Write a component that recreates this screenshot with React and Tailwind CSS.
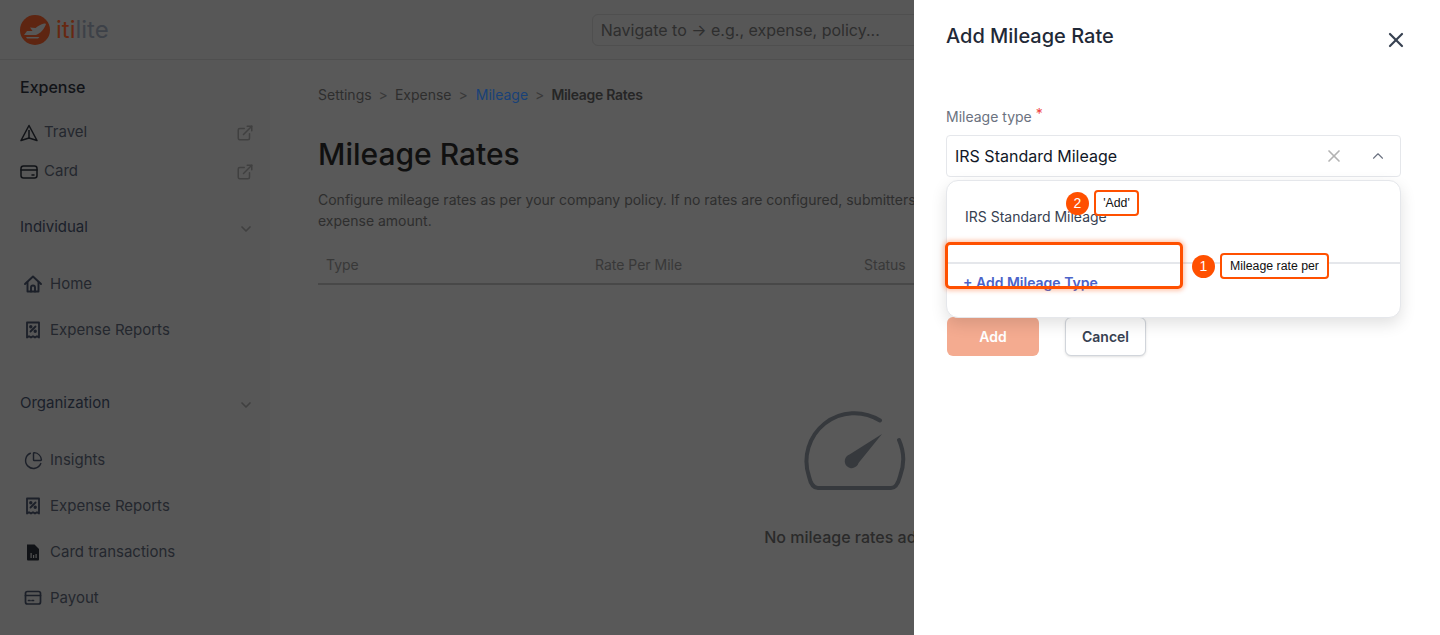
import React from "react";
import { ExternalLink, ChevronDown, ChevronUp, X, ChartPie } from "lucide-react";

const font = { fontFamily: "Inter, 'Liberation Sans', sans-serif" };
const ICON = "#1c2029";

function Home() {
  return (
    <svg width="20" height="20" viewBox="0 0 20 20" fill="none" stroke={ICON} strokeWidth="1.900" strokeLinejoin="round" strokeLinecap="round">
      <path d="M2 10L10 2.500 18 10" />
      <path d="M4.500 8.500V17.500H15.500V8.500" />
      <path d="M8 17.500V13.500a2 2 0 0 1 4 0v4" />
    </svg>
  );
}

function Receipt() {
  return (
    <svg width="20" height="20" viewBox="0 0 20 20" fill="none" stroke={ICON} strokeWidth="1.800" strokeLinejoin="round" strokeLinecap="round">
      <path d="M4 2.500h12v15l-2-1.300-2 1.300-2-1.300-2 1.300-2-1.300-2 1.300z" />
      <path d="M7.500 11.500l5-5" />
      <circle cx="7.800" cy="6.800" r=".8" fill={ICON} />
      <circle cx="12.200" cy="11.200" r=".8" fill={ICON} />
    </svg>
  );
}

function FileBars() {
  return (
    <svg width="20" height="20" viewBox="0 0 20 20">
      <path fill="#101216" d="M4 2.500h7.500L16 7v10.500a1 1 0 0 1-1 1H5a1 1 0 0 1-1-1z" />
      <path fill="#555" d="M7.500 11h1.200v5H7.500zM10 13h1.200v3H10zM12.500 12h1.200v4h-1.200z" />
    </svg>
  );
}

function PayCard() {
  return (
    <svg width="20" height="20" viewBox="0 0 20 20" fill="none" stroke={ICON} strokeWidth="1.700" strokeLinecap="round">
      <rect x="2.500" y="3.500" width="15" height="12.500" rx="2" />
      <path d="M2.500 7.500h15M5.500 12.500h1.500M9 12.500h1.500" />
    </svg>
  );
}

function Nav() {
  return (
    <svg width="18" height="18" viewBox="0 0 18 18" fill="none" stroke="#111317" strokeWidth="1.500" strokeLinejoin="round">
      <path d="M9 1.500L17 16.500 9 14 1 16.500z" />
      <path d="M9 6v8" />
    </svg>
  );
}

function MiniCard() {
  return (
    <svg width="18" height="18" viewBox="0 0 18 18" fill="none" stroke="#111317" strokeWidth="1.500" strokeLinecap="round">
      <rect x="1" y="3" width="16" height="12" rx="2.500" />
      <path d="M1 7h16M12 12h2" />
    </svg>
  );
}

function Head({ label, className }) {
  return (
    <div className={`flex h-6 items-center justify-between pr-[16px] text-[15px] text-[#1a202a] ${className}`}>
      <span>{label}</span>
      <ChevronDown size={16} strokeWidth={2.500} className="mt-1 text-[#404040]" />
    </div>
  );
}

function Item({ icon, label }) {
  return (
    <div className="flex h-[46px] items-center pl-[3px] text-[15px] text-[#24272e]">
      <span className="flex w-5 justify-center">{icon}</span>
      <span className="ml-[7px]">{label}</span>
    </div>
  );
}

function TopItem({ icon, label }) {
  return (
    <div className="flex h-[39px] items-center pr-[16px] text-[15px] text-[#24272e]">
      <span className="flex w-[18px] justify-center">{icon}</span>
      <span className="ml-[6px] flex-1">{label}</span>
      <ExternalLink size={18} className="text-[#404040]" />
    </div>
  );
}

function Sidebar() {
  return (
    <aside className="flex w-[270px] shrink-0 flex-col bg-[#575757] pl-5 pt-4">
      <div className="h-[22px] text-base font-medium leading-[22px] text-[#111317]">Expense</div>
      <div className="mt-[15px]">
        <TopItem icon={<Nav />} label="Travel" />
        <TopItem icon={<MiniCard />} label="Card" />
      </div>
      <Head label="Individual" className="mt-6" />
      <div className="mt-[22px]">
        <Item icon={<Home />} label="Home" />
        <Item icon={<Receipt />} label="Expense Reports" />
      </div>
      <Head label="Organization" className="mt-[38px]" />
      <div className="mt-[22px]">
        <Item icon={<ChartPie size={19} strokeWidth={1.800} className="text-[#1c2029]" />} label="Insights" />
        <Item icon={<Receipt />} label="Expense Reports" />
        <Item icon={<FileBars />} label="Card transactions" />
        <Item icon={<PayCard />} label="Payout" />
      </div>
    </aside>
  );
}

function Gauge() {
  return (
    <svg width="104" height="80" viewBox="0 0 104 80" fill="none">
      <path d="M77 9.500A48 48 0 0 0 6 65.500Q8.500 77 15 77H88Q94 77 97 65.500A48 48 0 0 0 96 29" stroke="#36393d" strokeWidth="4" strokeLinecap="round" />
      <path d="M79 23L55.500 52a7 7 0 1 1-9-8.500z" fill="#36393d" />
    </svg>
  );
}

function Main() {
  return (
    <main className="flex-1 bg-[#595959] pl-12 pr-12 pt-6">
      <nav className="flex h-5 items-center text-[14px] text-[#2e2e2e]">
        <span>Settings</span>
        <span className="mx-[7px] text-[#3a3a3a]">&gt;</span>
        <span>Expense</span>
        <span className="ml-[7px] mr-[8px] text-[#3a3a3a]">&gt;</span>
        <span className="text-[#184178]">Mileage</span>
        <span className="mx-[7px] text-[#3a3a3a]">&gt;</span>
        <span className="font-semibold tracking-[-0.3px] text-[#262626]">Mileage Rates</span>
      </nav>
      <h1 className="mt-[32px] text-[30px] font-medium leading-9 text-[#101010]">Mileage Rates</h1>
      <p className="mt-[17px] text-[14px] leading-[21px] text-[#2e2e2e]">
        Configure mileage rates as per your company policy. If no rates are configured, submitters can manually enter the
        <br />
        expense amount.
      </p>
      <div className="mt-[10px] flex h-[44px] items-center border-b-2 border-[#484848] pl-2 pt-[5px] text-[14px] text-[#383838]">
        <span className="w-[269px]">Type</span>
        <span className="w-[269px]">Rate Per Mile</span>
        <span>Status</span>
      </div>
      <div className="mt-[126px] flex flex-col items-center">
        <Gauge />
        <p className="mt-[34px] text-base font-medium text-[#2a2a2a]">No mileage rates added</p>
      </div>
    </main>
  );
}

function Tag({ n, text, className, tagClass }) {
  return (
    <div className={`absolute flex items-center ${className}`}>
      <span className="flex h-[23px] w-[23px] items-center justify-center rounded-full bg-[#ff5000] text-[14px] text-white" style={{ fontFamily: "'Liberation Sans', sans-serif" }}>
        {n}
      </span>
      <span
        className={`ml-[5px] flex h-[26px] items-center justify-center rounded-[4px] border-2 border-[#ff5000] bg-white text-[12.3px] text-[#111] ${tagClass}`}
        style={{ fontFamily: "'Liberation Sans', sans-serif" }}
      >
        {text}
      </span>
    </div>
  );
}

function Drawer() {
  return (
    <section className="absolute bottom-0 right-0 top-0 flex w-[526px] flex-col bg-white pl-8 pr-[39px]">
      <div className="flex h-[72px] items-start justify-between pt-[22px]">
        <h2 className="text-xl font-medium leading-7 text-[#1f2937]">Add Mileage Rate</h2>
        <X size={24} strokeWidth={2.200} className="-mr-[7px] mt-[6px] text-[#374151]" />
      </div>
      <label className="mt-[35px] flex h-[18px] items-center text-[14px] text-[#6b7280]">
        Mileage type <span className="relative -top-[3px] ml-1 text-[#ef4444]">*</span>
      </label>
      <div className="relative mt-[10px]">
        <div className="flex h-[42px] items-center rounded border border-[#e5e7eb] pl-2 pr-[13px] text-base text-[#111827]">
          <span className="flex-1">IRS Standard Mileage</span>
          <X size={20} strokeWidth={2} className="text-[#b3b3b3]" />
          <ChevronUp size={18} strokeWidth={1.500} className="ml-[25px] text-[#6b7280]" />
        </div>
        <div className="absolute left-0 right-0 top-[45px] z-10 h-[138px] rounded-xl border border-[#e5e7eb] bg-white shadow-[0_6px_16px_rgba(0,0,0,0.12)]">
          <div className="pl-[18px] pt-[26px] text-[14px] leading-5 text-[#374151]">IRS Standard Mileage</div>
          <div className="mt-[35px] h-[2px] bg-[#e5e7eb]" />
          <div className="pl-[16px] pt-[9px] text-[14px] font-semibold leading-5 text-[#4a63c9]">+ Add Mileage Type</div>
        </div>
      </div>
      <div className="mt-[140px] flex items-center pl-px">
        <button className="h-[39px] w-[92px] rounded-md bg-[#f4ab90] text-[14px] font-semibold text-white">Add</button>
        <button className="ml-[26px] h-[39px] w-[81px] rounded-md border border-[#d1d5db] bg-white text-[14px] font-semibold text-[#374151] shadow-sm">Cancel</button>
      </div>
    </section>
  );
}

export default function App() {
  return (
    <div className="relative h-[635px] w-[1440px] overflow-hidden bg-[#595959]" style={font}>
      <header className="flex h-[60px] items-center border-b border-[#4f4f4f] bg-[#575757] pl-5">
        <svg width="30" height="30" viewBox="0 0 30 30">
          <circle cx="15" cy="15" r="15" fill="#5e2511" />
          <path fill="#575757" d="M26 9C23 7.500 19.500 10.500 15.500 13L10 12.500 12.500 16H7L4 20H16C20.500 18.500 24.500 14 26 9z" />
          <path fill="#575757" d="M6 22h13.500l-1.500 1.500H7z" />
        </svg>
        <span className="ml-[6px] text-[24px] leading-none text-[#3d4148]">
          <span className="text-[#672811]">iti</span>lite
        </span>
        <div className="ml-[483px] flex h-8 w-[400px] shrink-0 items-center rounded-md border border-[#4f4f4f] pl-2 text-base text-[#2e2e2e]">
          Navigate to → e.g., expense, policy...
        </div>
      </header>
      <div className="flex h-[575px]">
        <Sidebar />
        <Main />
      </div>
      <Drawer />
      <div className="absolute left-[945px] top-[242px] z-20 h-[47px] w-[238px] rounded-[5px] border-[3px] border-[#ff5000] shadow-[0_0_4px_2px_rgba(255,80,0,0.3)]" />
      <Tag n="2" text="'Add'" className="left-[1066px] top-[190px] z-20" tagClass="w-[45px]" />
      <Tag n="1" text="Mileage rate per" className="left-[1192px] top-[253px] z-20" tagClass="w-[109px]" />
    </div>
  );
}
